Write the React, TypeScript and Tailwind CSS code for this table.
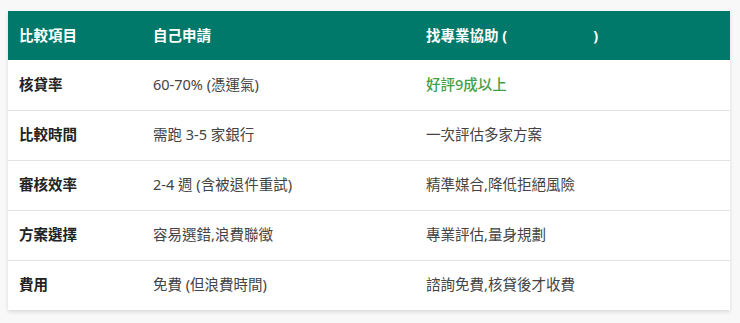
const rows = [
  { item: '核貸率', self: '60-70% (憑運氣)', pro: '好評9成以上', highlight: true },
  { item: '比較時間', self: '需跑 3-5 家銀行', pro: '一次評估多家方案' },
  { item: '審核效率', self: '2-4 週 (含被退件重試)', pro: '精準媒合,降低拒絕風險' },
  { item: '方案選擇', self: '容易選錯,浪費聯徵', pro: '專業評估,量身規劃' },
  { item: '費用', self: '免費 (但浪費時間)', pro: '諮詢免費,核貸後才收費' },
];

const App = () => {
  return (
    <div className="min-h-screen bg-[#f8f8f8] pt-[11px] pl-2 font-['Noto_Sans','Noto_Sans_CJK_TC',sans-serif]">
      <div className="w-[722px] bg-white shadow-[0_2px_4px_rgba(0,0,0,0.12)]">
        <table className="w-full border-collapse text-left text-[14.5px]">
          <thead>
            <tr className="bg-[#00796b] text-white">
              <th className="w-[134px] h-[49px] pl-[11px] pr-3 font-bold">比較項目</th>
              <th className="w-[273px] pl-[11px] pr-3 font-bold">自己申請</th>
              <th className="pl-[11px] pr-3 font-bold">
                找專業協助 (<span className="inline-block w-[86px]"></span>)
              </th>
            </tr>
          </thead>
          <tbody>
            {rows.map((row, i) => (
              <tr key={i} className="border-b border-[#e3e3e3] last:border-b-0">
                <td className="h-[50px] pl-[11px] pr-3 font-bold text-[#222]">{row.item}</td>
                <td className="pl-[11px] pr-3 text-[#444]">{row.self}</td>
                <td className={row.highlight ? 'pl-[11px] pr-3 font-medium text-[#43a047]' : 'pl-[11px] pr-3 text-[#444]'}>
                  {row.pro}
                </td>
              </tr>
            ))}
          </tbody>
        </table>
      </div>
    </div>
  );
};

export default App;
